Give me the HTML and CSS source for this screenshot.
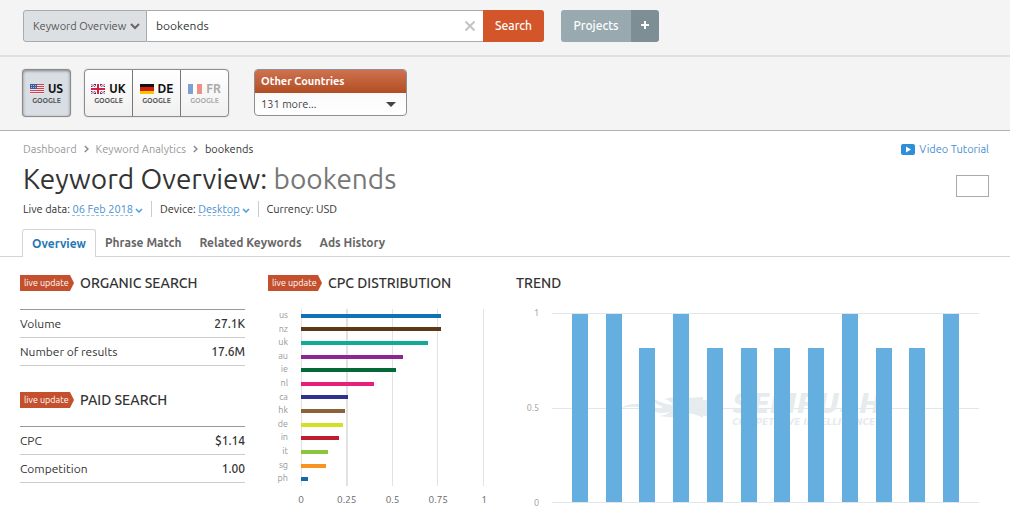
FILE: index.html
```html
<!DOCTYPE html>
<html lang="en">
<head>
  <meta charset="UTF-8">
  <meta name="viewport" content="width=device-width, initial-scale=1.0">
  <title>Keyword Overview: bookends</title>
  <link rel="stylesheet" href="styles.css">
</head>
<body>
  <header class="topbar">
    <form class="search" role="search">
      <select class="search-type" aria-label="Report type">
        <option>Keyword Overview</option>
      </select>
      <div class="search-field">
        <input type="text" value="bookends" aria-label="Keyword">
        <button type="reset" class="search-clear" aria-label="Clear">
          <svg width="12" height="12" viewBox="0 0 12 12"><path d="M1.500 1.500L10.500 10.500M10.500 1.500L1.500 10.500" stroke="#c4c4c4" stroke-width="2" fill="none"/></svg>
        </button>
      </div>
      <button type="submit" class="search-submit">Search</button>
    </form>
    <div class="projects">
      <button class="projects-open">Projects</button>
      <button class="projects-add" aria-label="Add project">
        <svg width="10" height="10" viewBox="0 0 10 10"><path d="M5 1V9M1 5H9" stroke="#fff" stroke-width="2"/></svg>
      </button>
    </div>
  </header>

  <div class="countries">
    <div class="db-group db-group-active">
      <button class="db">
        <span class="db-name">
          <svg width="14" height="10" viewBox="0 0 14 10"><rect width="14" height="10" fill="#f3e4e6"/><path d="M0 .5H14M0 2.500H14M0 4.500H14M0 6.500H14M0 8.500H14" stroke="#cf4351"/><rect width="7" height="5" fill="#3c5a9c"/><path d="M1 1.500H6M1 3.500H6" stroke="#a9b9dc" stroke-dasharray="1 1"/></svg>
          US
        </span>
        <span class="db-engine">GOOGLE</span>
      </button>
    </div>
    <div class="db-group">
      <button class="db">
        <span class="db-name">
          <svg width="14" height="10" viewBox="0 0 14 10"><rect width="14" height="10" fill="#2b3a80"/><path d="M0 0L14 10M14 0L0 10" stroke="#fff" stroke-width="2.400"/><path d="M0 0L14 10M14 0L0 10" stroke="#d3213f" stroke-width=".8"/><path d="M7 0V10M0 5H14" stroke="#fff" stroke-width="4"/><path d="M7 0V10M0 5H14" stroke="#d3213f" stroke-width="2"/></svg>
          UK
        </span>
        <span class="db-engine">GOOGLE</span>
      </button>
      <button class="db">
        <span class="db-name">
          <svg width="14" height="10" viewBox="0 0 14 10"><rect width="14" height="4" fill="#111"/><rect y="3" width="14" height="4" fill="#d81e05"/><rect y="7" width="14" height="3" fill="#f8c600"/></svg>
          DE
        </span>
        <span class="db-engine">GOOGLE</span>
      </button>
      <button class="db db-muted">
        <span class="db-name">
          <svg width="14" height="10" viewBox="0 0 14 10"><rect width="14" height="10" fill="#fff"/><rect width="5" height="10" fill="#7d9fd3"/><rect x="9" width="5" height="10" fill="#f08f86"/></svg>
          FR
        </span>
        <span class="db-engine">GOOGLE</span>
      </button>
    </div>
    <div class="other">
      <label class="other-title" for="otherCountries">Other Countries</label>
      <select class="other-select" id="otherCountries">
        <option>131 more...</option>
      </select>
    </div>
  </div>

  <main>
    <div class="page-head">
      <div class="page-head-main">
        <nav class="crumbs" aria-label="Breadcrumb">
          <a href="#">Dashboard</a>
          <svg width="5" height="8" viewBox="0 0 5 8"><path d="M.8 1L4 4L.8 7" stroke="#888" stroke-width="1.400" fill="none"/></svg>
          <a href="#">Keyword Analytics</a>
          <svg width="5" height="8" viewBox="0 0 5 8"><path d="M.8 1L4 4L.8 7" stroke="#888" stroke-width="1.400" fill="none"/></svg>
          <span>bookends</span>
        </nav>
        <h1>Keyword Overview: <span>bookends</span></h1>
        <div class="meta">
          <div>Live data: <a href="#">06 Feb 2018</a><svg width="8" height="5" viewBox="0 0 8 5"><path d="M1 1L4 4L7 1" stroke="#4d9fdc" stroke-width="1.500" fill="none"/></svg></div>
          <div>Device: <a href="#">Desktop</a><svg width="8" height="5" viewBox="0 0 8 5"><path d="M1 1L4 4L7 1" stroke="#4d9fdc" stroke-width="1.500" fill="none"/></svg></div>
          <div>Currency: USD</div>
        </div>
      </div>
      <div class="page-head-side">
        <a class="video" href="#">
          <svg width="14" height="12" viewBox="0 0 14 12"><rect y="1" width="14" height="11" rx="2" fill="#2e8fd8"/><path d="M5 3.500L10 6.500L5 9.500Z" fill="#fff"/></svg>
          Video Tutorial
        </a>
        <button class="blank-button" aria-label="Options"></button>
      </div>
    </div>

    <nav class="tabs">
      <a class="active" href="#">Overview</a>
      <a href="#">Phrase Match</a>
      <a href="#">Related Keywords</a>
      <a href="#">Ads History</a>
    </nav>

    <div class="widgets">
      <div class="summary">
        <section>
          <h2><span class="live">live update</span>ORGANIC SEARCH</h2>
          <table class="stats">
            <tr><th scope="row">Volume</th><td>27.1K</td></tr>
            <tr><th scope="row">Number of results</th><td>17.6M</td></tr>
          </table>
        </section>
        <section>
          <h2><span class="live">live update</span>PAID SEARCH</h2>
          <table class="stats">
            <tr><th scope="row">CPC</th><td>$1.14</td></tr>
            <tr><th scope="row">Competition</th><td>1.00</td></tr>
          </table>
        </section>
      </div>

      <section>
        <h2><span class="live">live update</span>CPC DISTRIBUTION</h2>
        <div class="cpc">
          <div class="cpc-labels" id="cpcLabels"></div>
          <div class="cpc-plot" id="cpcPlot"></div>
          <div class="cpc-axis"><span>0</span><span>0.25</span><span>0.5</span><span>0.75</span><span>1</span></div>
        </div>
      </section>

      <section>
        <h2>TREND</h2>
        <div class="trend">
          <div class="trend-axis"><span>1</span><span>0.5</span><span>0</span></div>
          <div class="trend-plot">
            <div class="watermark">
              <svg width="105" height="26" viewBox="0 0 105 26"><path d="M0 13Q9 8 19 9L24 10L33 13Q38 14 42 12Q33 9 31 3Q42 9 52 10Q49 5 43 4Q58 0 66 3L82 2V23Q72 17 62 19Q54 24 38 21Q46 20 49 17Q36 20 28 14Q14 10 0 13Z"/><path d="M89 2A11 11 0 0 1 89 24Q94 13 89 2Z"/><circle cx="85" cy="13" r="8"/></svg>
              <div class="watermark-text">
                <b>SEMRUSH</b>
                <span>COMPETITIVE INTELLIGENCE</span>
              </div>
            </div>
            <div class="trend-bars" id="trendBars"></div>
          </div>
        </div>
      </section>
    </div>
  </main>

  <script src="script.js"></script>
</body>
</html>
```
FILE: styles.css
```css
* {
  box-sizing: border-box;
}

body {
  margin: 0;
  background-color: #fff;
  color: #333;
  font-family: Ubuntu, "Noto Sans", "Open Sans", sans-serif;
  font-size: 12px;
  line-height: 16px;
}

button,
input,
select {
  margin: 0;
  font: inherit;
  color: inherit;
}

button {
  padding: 0;
  border: none;
  background: none;
  cursor: pointer;
}

a {
  color: #4a90d2;
  text-decoration: none;
}

/* search row */
.topbar {
  display: flex;
  gap: 17px;
  height: 57px;
  padding: 10px 23px 0;
  background-color: #f4f4f4;
  border-bottom: 2px solid #dfdfdf;
}

.search {
  display: flex;
  width: 521px;
  height: 32px;
}

.search-type {
  appearance: none;
  width: 124px;
  padding: 0 9px;
  border: 1px solid #a6abaf;
  border-radius: 3px 0 0 3px;
  background: #dce0e3 url("data:image/svg+xml,%3Csvg xmlns='http://www.w3.org/2000/svg' width='10' height='7'%3E%3Cpath d='M1 1l4 4 4-4' fill='none' stroke='%23666' stroke-width='2'/%3E%3C/svg%3E") no-repeat right 6px center;
  color: #555;
  font-size: 11px;
}

.search-field {
  display: flex;
  flex: 1;
  align-items: center;
  border: 1px solid #a6abaf;
  border-width: 1px 0;
  background-color: #fff;
}

.search-field input {
  flex: 1;
  min-width: 0;
  padding: 0 9px;
  border: none;
  outline: none;
  background: none;
}

.search-clear {
  display: flex;
  padding: 0 7px;
}

.search-submit {
  width: 61px;
  border-radius: 0 3px 3px 0;
  background-color: #d3552a;
  color: #fff;
  font-weight: 500;
}

.projects {
  display: flex;
  height: 32px;
  border-radius: 3px;
  overflow: hidden;
  color: #fff;
}

.projects-open {
  width: 70px;
  background-color: #98aab0;
  font-weight: 500;
}

.projects-add {
  width: 28px;
  background-color: #7d8f95;
}

/* databases row */
.countries {
  display: flex;
  height: 74px;
  padding: 12px 22px 0;
  background-color: #f4f4f4;
  border-bottom: 1px solid #b0b0b0;
}

.db-group {
  display: flex;
  width: 145px;
  height: 48px;
  margin-right: 25px;
  border: 1px solid #8c8c8c;
  border-radius: 4px;
  background: linear-gradient(#fff, #f0f0f0);
  box-shadow: 0 0 1px #8c8c8c;
}

.db-group-active {
  width: 49px;
  margin-right: 13px;
  background: #d9dde4;
  box-shadow: 0 0 1px #8c8c8c, inset 0 1px 3px #7c828a;
}

.db {
  display: flex;
  flex: 1;
  flex-direction: column;
  align-items: center;
  justify-content: center;
  color: #111;
}

.db + .db {
  border-left: 1px solid #777;
}

.db-name {
  display: flex;
  align-items: center;
  gap: 4px;
  font-weight: 700;
  line-height: 14px;
}

.db-engine {
  color: #555;
  font-size: 7px;
  font-weight: 600;
  line-height: 9px;
}

.db-muted,
.db-muted .db-engine {
  color: #aaa;
}

.other {
  width: 153px;
  height: 47px;
  border: 1px solid #8f8f8f;
  border-radius: 4px;
  background: linear-gradient(#f4f4f4, #fff);
  overflow: hidden;
}

.other-title {
  display: block;
  padding: 0 6px;
  background: linear-gradient(#cf7250, #b14d22);
  color: #fff;
  font-size: 11px;
  font-weight: 700;
  line-height: 23px;
}

.other-select {
  appearance: none;
  width: 100%;
  height: 22px;
  padding: 0 6px;
  border: none;
  background: url("data:image/svg+xml,%3Csvg xmlns='http://www.w3.org/2000/svg' width='10' height='5'%3E%3Cpath d='M0 0h10l-5 5z' fill='%23444'/%3E%3C/svg%3E") no-repeat right 10px center;
  color: #444;
  font-size: 11px;
}

/* page heading */
.page-head {
  display: flex;
  justify-content: space-between;
  padding: 10px 21px 0 23px;
}

.crumbs {
  display: flex;
  align-items: center;
  gap: 7px;
  font-size: 11px;
}

.crumbs a {
  color: #999;
}

h1 {
  margin: 4px 0;
  font-size: 28px;
  font-weight: 400;
  line-height: 36px;
}

h1 span {
  color: #777;
}

.meta {
  display: flex;
  font-size: 11px;
}

.meta div + div {
  margin-left: 8px;
  padding-left: 8px;
  border-left: 1px solid #ccc;
}

.meta a {
  border-bottom: 1px dashed #8fc0e6;
}

.meta svg {
  margin-left: 2px;
}

.page-head-side {
  display: flex;
  flex-direction: column;
  align-items: flex-end;
  gap: 18px;
  font-size: 11px;
}

.video {
  display: flex;
  align-items: center;
  gap: 4px;
}

.blank-button {
  width: 33px;
  height: 22px;
  border: 1px solid #aaa;
}

.tabs {
  display: flex;
  height: 40px;
  padding: 12px 22px 0;
  border-bottom: 1px solid #d5d5d5;
}

.tabs a {
  padding: 6px 9px;
  color: #666;
  font-weight: 600;
}

.tabs .active {
  height: 28px;
  border: 1px solid #d5d5d5;
  border-bottom: none;
  border-radius: 3px 3px 0 0;
  background-color: #fff;
  color: #1f78b8;
}

/* widgets */
.widgets {
  display: grid;
  grid-template-columns: 225px 225px 1fr;
  gap: 23px;
  padding: 18px 31px 0 20px;
}

h2 {
  display: flex;
  align-items: center;
  gap: 6px;
  margin: 0 0 18px;
  font-size: 14px;
  font-weight: 500;
  line-height: 16px;
}

.live {
  width: 54px;
  padding-left: 4px;
  background-color: #c4502e;
  color: #fff;
  clip-path: polygon(0 0, 50px 0, 100% 50%, 50px 100%, 0 100%);
  font-size: 9px;
  font-weight: 400;
  white-space: nowrap;
}

.summary {
  display: flex;
  flex-direction: column;
  gap: 26px;
}

.stats {
  width: 100%;
  border-collapse: collapse;
  border-top: 1px solid #999;
}

.stats th,
.stats td {
  height: 28px;
  padding: 0;
  border-bottom: 1px solid #ccc;
}

.stats th {
  font-weight: 400;
  text-align: left;
}

.stats td {
  font-weight: 500;
  text-align: right;
}

.cpc {
  display: grid;
  grid-template-columns: 20px 183px;
  column-gap: 13px;
}

.cpc-labels,
.cpc-plot {
  display: flex;
  flex-direction: column;
  height: 177px;
}

.cpc-labels span {
  flex: 1;
  color: #999;
  font-size: 9px;
  line-height: 13px;
  text-align: right;
}

/* one grid line for each quarter */
.cpc-plot {
  background: repeating-linear-gradient(90deg, #e2e2e2 0 1px, transparent 1px 25%);
  border-right: 1px solid #e2e2e2;
}

.cpc-row {
  display: flex;
  flex: 1;
  align-items: center;
}

.cpc-bar {
  height: 4px;
}

.cpc-axis {
  display: flex;
  grid-column: 2;
  justify-content: space-between;
  margin: 6px -20px 0;
  color: #666;
  font-size: 10px;
}

.cpc-axis span {
  width: 40px;
  text-align: center;
}

.trend {
  display: flex;
  gap: 13px;
  padding-top: 4px;
}

.trend-axis {
  display: flex;
  flex-direction: column;
  justify-content: space-between;
  width: 23px;
  height: 206px;
  margin: -8px 0;
  color: #999;
  font-size: 9px;
  text-align: right;
}

.trend-plot {
  display: grid;
  flex: 1;
  height: 190px;
  border: 1px solid #e0e6ea;
  border-width: 1px 0;
  background: linear-gradient(#e0e6ea, #e0e6ea) no-repeat center / 100% 1px;
}

.watermark,
.trend-bars {
  grid-area: 1 / 1;
}

.watermark {
  display: flex;
  align-items: center;
  align-self: center;
  justify-self: center;
  gap: 6px;
  padding-right: 28px;
  color: #e6ebee;
  fill: #e6ebee;
}

.watermark-text {
  display: flex;
  flex-direction: column;
  font-family: "DejaVu Sans", sans-serif;
  font-style: italic;
  font-weight: 700;
  white-space: nowrap;
}

.watermark-text b {
  font-size: 27px;
  line-height: 27px;
}

.watermark-text span {
  font-size: 9px;
  line-height: 10px;
}

.trend-bars {
  display: flex;
  align-items: flex-end;
  justify-content: space-around;
  padding: 0 11px;
}

.trend-bar {
  width: 16px;
  background-color: #64aee0;
}
```
FILE: script.js
```js
const cpc = [
  { country: 'us', value: 0.77, color: '#0e72b5' },
  { country: 'nz', value: 0.77, color: '#5e3716' },
  { country: 'uk', value: 0.7, color: '#10a99a' },
  { country: 'au', value: 0.56, color: '#8d278f' },
  { country: 'ie', value: 0.52, color: '#056838' },
  { country: 'nl', value: 0.4, color: '#e81e79' },
  { country: 'ca', value: 0.26, color: '#2f3190' },
  { country: 'hk', value: 0.24, color: '#8b6239' },
  { country: 'de', value: 0.23, color: '#d4df26' },
  { country: 'in', value: 0.21, color: '#be1e2d' },
  { country: 'it', value: 0.15, color: '#8cc63f' },
  { country: 'sg', value: 0.14, color: '#f7931e' },
  { country: 'ph', value: 0.04, color: '#1768a8' }
];

const trend = [1, 1, 0.82, 1, 0.82, 0.82, 0.82, 0.82, 1, 0.82, 0.82, 1];

const cpcLabels = document.getElementById('cpcLabels');
const cpcPlot = document.getElementById('cpcPlot');
cpc.forEach(item => {
  const label = document.createElement('span');
  label.textContent = item.country;
  cpcLabels.appendChild(label);

  const row = document.createElement('div');
  row.className = 'cpc-row';
  const bar = document.createElement('div');
  bar.className = 'cpc-bar';
  bar.style.width = item.value * 100 + '%';
  bar.style.backgroundColor = item.color;
  row.appendChild(bar);
  cpcPlot.appendChild(row);
});

const trendBars = document.getElementById('trendBars');
trend.forEach(value => {
  const bar = document.createElement('div');
  bar.className = 'trend-bar';
  bar.style.height = value * 100 + '%';
  trendBars.appendChild(bar);
});
```
